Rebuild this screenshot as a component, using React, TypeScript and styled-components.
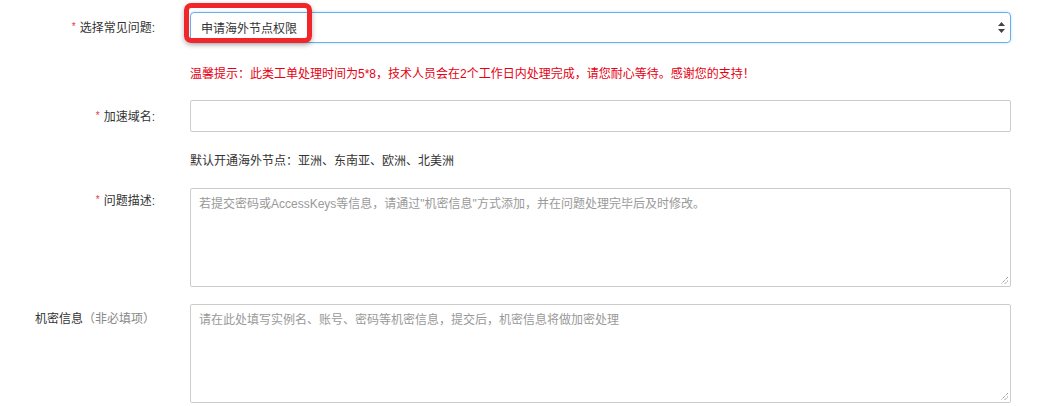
import React from 'react';
import styled, { createGlobalStyle } from 'styled-components';

const GlobalStyle = createGlobalStyle`
  html, body {
    margin: 0;
    padding: 0;
    background: #fff;
  }
  body {
    font-family: "Liberation Sans", "Noto Sans CJK SC", sans-serif;
    font-size: 12px;
    color: #333;
  }
`;

const Form = styled.form`
  width: 1011px;
  padding-top: 12px;
`;

const Group = styled.div<{ $mb?: number }>`
  display: grid;
  grid-template-columns: 155px 821px;
  column-gap: 35px;
  margin-bottom: ${(p) => p.$mb ?? 0}px;
`;

const Label = styled.label<{ $top?: number }>`
  text-align: right;
  padding-top: ${(p) => p.$top ?? 8}px;
  line-height: 16px;
  font-size: 12px;
  color: #333;
  white-space: nowrap;
`;

const Star = styled.span`
  color: #e4393c;
  margin-right: 4px;
  font-size: 10px;
  vertical-align: 2px;
`;

const Optional = styled.span`
  color: #888;
`;

const Field = styled.div`
  position: relative;
`;

const Select = styled.div`
  box-sizing: border-box;
  height: 31px;
  border: 1px solid #66afe9;
  border-radius: 4px;
  box-shadow: 0 0 3px rgba(102, 175, 233, 0.4);
  display: flex;
  align-items: center;
  justify-content: space-between;
  padding: 0 5px 0 10px;
  font-size: 12px;
  color: #333;
`;

const Arrows = styled.svg`
  width: 7px;
  height: 11px;
`;

const Highlight = styled.div`
  position: absolute;
  left: -6px;
  top: -9px;
  width: 128px;
  height: 40px;
  box-sizing: border-box;
  border: 5px solid #f0262a;
  border-radius: 7px;
  box-shadow: 0 2px 5px rgba(0, 0, 0, 0.3);
  pointer-events: none;
`;

const Input = styled.div`
  box-sizing: border-box;
  height: 32px;
  border: 1px solid #ccc;
  border-radius: 2px;
`;

const Help = styled.div<{ $warn?: boolean; $mt: number; $mb: number }>`
  margin-left: 190px;
  margin-top: ${(p) => p.$mt}px;
  margin-bottom: ${(p) => p.$mb}px;
  line-height: 18px;
  font-size: 12px;
  color: ${(p) => (p.$warn ? '#e60012' : '#333')};
`;

const TextArea = styled.div`
  position: relative;
  box-sizing: border-box;
  height: 99px;
  border: 1px solid #ccc;
  border-radius: 2px;
  padding: 7px 8px;
  color: #999;
  font-size: 12px;
  line-height: 16px;
`;

const Grip = styled.svg`
  position: absolute;
  right: 1px;
  bottom: 1px;
  width: 9px;
  height: 9px;
`;

const ResizeGrip = () => (
  <Grip viewBox="0 0 9 9">
    <path d="M8 1 L1 8 M8 4.5 L4.5 8" stroke="#777" strokeWidth="1" strokeDasharray="1 1" />
  </Grip>
);

export default function App() {
  return (
    <>
      <GlobalStyle />
      <Form>
        <Group>
          <Label $top={7}>
            <Star>*</Star>选择常见问题:
          </Label>
          <Field>
            <Select>
              <span>申请海外节点权限</span>
              <Arrows viewBox="0 0 7 11">
                <path d="M3.5 0 L7 4 L0 4 Z M0 7 L7 7 L3.5 11 Z" fill="#444" />
              </Arrows>
            </Select>
            <Highlight />
          </Field>
        </Group>
        <Help $warn $mt={22} $mb={17}>
          温馨提示：此类工单处理时间为5*8，技术人员会在2个工作日内处理完成，请您耐心等待。感谢您的支持！
        </Help>
        <Group>
          <Label>
            <Star>*</Star>加速域名:
          </Label>
          <Input />
        </Group>
        <Help $mt={20} $mb={18}>
          默认开通海外节点：亚洲、东南亚、欧洲、北美洲
        </Help>
        <Group $mb={17}>
          <Label $top={4}>
            <Star>*</Star>问题描述:
          </Label>
          <TextArea>
            若提交密码或AccessKeys等信息，请通过"机密信息"方式添加，并在问题处理完毕后及时修改。
            <ResizeGrip />
          </TextArea>
        </Group>
        <Group>
          <Label $top={7}>
            机密信息<Optional>（非必填项）</Optional>
          </Label>
          <TextArea>
            请在此处填写实例名、账号、密码等机密信息，提交后，机密信息将做加密处理
            <ResizeGrip />
          </TextArea>
        </Group>
      </Form>
    </>
  );
}
